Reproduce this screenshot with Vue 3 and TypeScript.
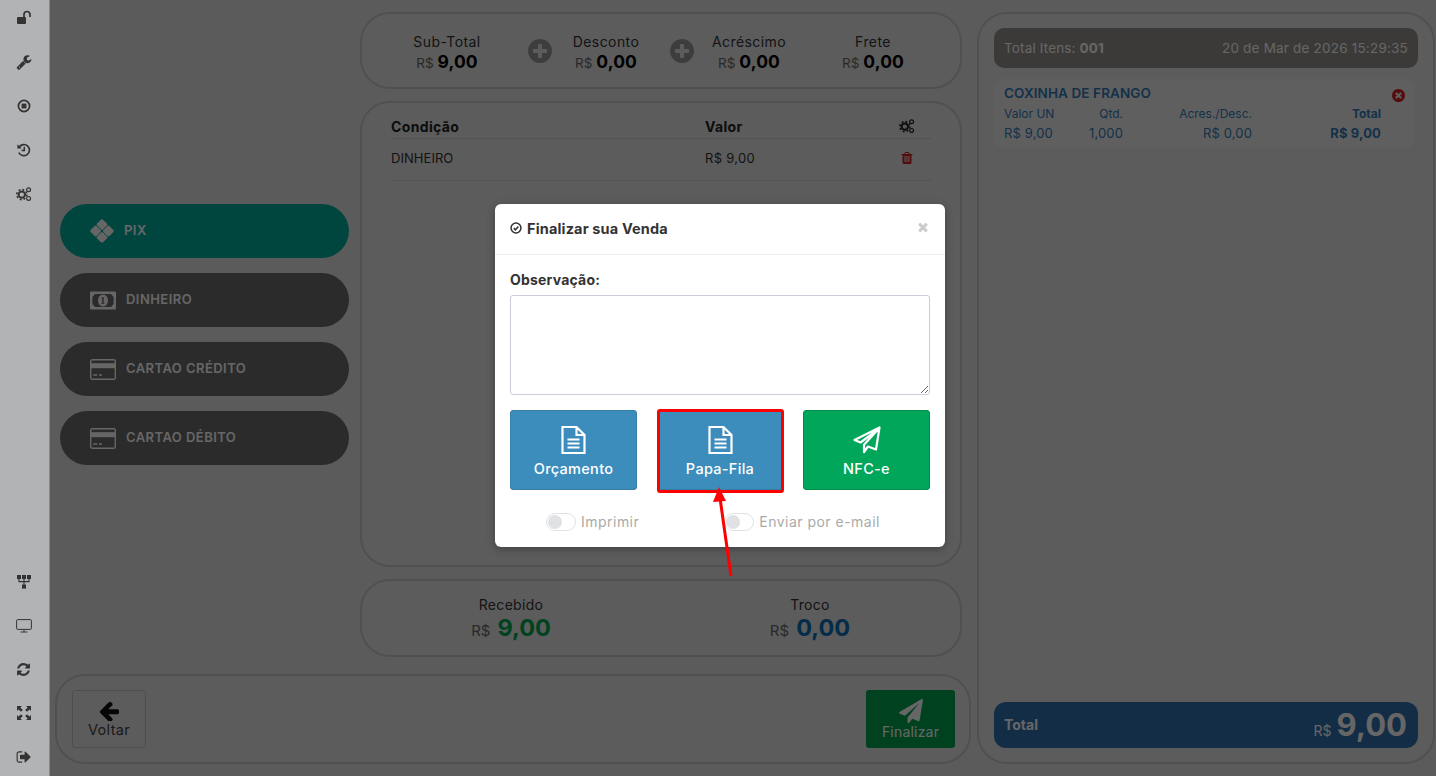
<script setup lang="ts">
const P = {
  plane: 'M1764 11q33 24 27 64l-256 1536q-5 29-32 45-14 8-31 8-11 0-24-5l-453-185-242 295q-18 23-49 23-13 0-22-4-19-7-30.5-23.5t-11.5-36.5v-349l864-1059-1069 925-395-162q-37-14-40-55-2-40 32-59l1664-960q15-9 32-9 20 0 36 11z',
  left: 'M1664 896v128q0 53-32.5 90.5t-84.5 37.5h-704l293 294q38 36 38 90t-38 90l-75 76q-37 37-90 37-52 0-91-37l-651-652q-37-37-37-90 0-52 37-91l651-650q38-38 91-38 52 0 90 38l75 74q38 38 38 91t-38 91l-293 293h704q52 0 84.5 37.5t32.5 90.5z',
  plus: 'M1344 960v-128q0-26-19-45t-45-19h-256v-256q0-26-19-45t-45-19h-128q-26 0-45 19t-19 45v256h-256q-26 0-45 19t-19 45v128q0 26 19 45t45 19h256v256q0 26 19 45t45 19h128q26 0 45-19t19-45v-256h256q26 0 45-19t19-45zm320-64q0 209-103 385.5t-279.5 279.5-385.5 103-385.5-103-279.5-279.5-103-385.5 103-385.5 279.5-279.5 385.5-103 385.5 103 279.5 279.5 103 385.5z',
  times: 'M1490 1322q0 40-28 68l-136 136q-28 28-68 28t-68-28l-294-294-294 294q-28 28-68 28t-68-28l-136-136q-28-28-28-68t28-68l294-294-294-294q-28-28-28-68t28-68l136-136q28-28 68-28t68 28l294 294 294-294q28-28 68-28t68 28l136 136q28 28 28 68t-28 68l-294 294 294 294q28 28 28 68z',
  timesCircle: 'M1277 1122q0-26-19-45l-181-181 181-181q19-19 19-45 0-27-19-46l-90-90q-19-19-46-19-26 0-45 19l-181 181-181-181q-19-19-45-19-27 0-46 19l-90 90q-19 19-19 46 0 26 19 45l181 181-181 181q-19 19-19 45 0 27 19 46l90 90q19 19 46 19 26 0 45-19l181-181 181 181q19 19 45 19 27 0 46-19l90-90q19-19 19-46zm387-226q0 209-103 385.5t-279.5 279.5-385.5 103-385.5-103-279.5-279.5-103-385.5 103-385.5 279.5-279.5 385.5-103 385.5 103 279.5 279.5 103 385.5z',
  refresh: 'M1639 1056q0 5-1 7-64 268-268 434.5t-478 166.5q-146 0-282.5-55t-243.5-157l-129 129q-19 19-45 19t-45-19-19-45v-448q0-26 19-45t45-19h448q26 0 45 19t19 45-19 45l-137 137q71 66 161 102t187 36q134 0 250-65t186-179q11-17 53-117 8-23 30-23h192q13 0 22.5 9.5t9.5 22.5zm25-800v448q0 26-19 45t-45 19h-448q-26 0-45-19t-19-45 19-45l138-138q-148-137-349-137-134 0-250 65t-186 179q-11 17-53 117-8 23-30 23h-199q-13 0-22.5-9.5t-9.5-22.5v-7q65-268 270-434.5t480-166.5q146 0 284 55.5t245 156.5l130-129q19-19 45-19t45 19 19 45z',
  trash: 'M704 1376v-704q0-14-9-23t-23-9h-64q-14 0-23 9t-9 23v704q0 14 9 23t23 9h64q14 0 23-9t9-23zm256 0v-704q0-14-9-23t-23-9h-64q-14 0-23 9t-9 23v704q0 14 9 23t23 9h64q14 0 23-9t9-23zm256 0v-704q0-14-9-23t-23-9h-64q-14 0-23 9t-9 23v704q0 14 9 23t23 9h64q14 0 23-9t9-23zm-544-992h448l-48-117q-7-9-17-11h-317q-10 2-17 11zm928 32v64q0 14-9 23t-23 9h-96v948q0 83-47 143.5t-113 60.5h-832q-66 0-113-58.5t-47-141.5v-952h-96q-14 0-23-9t-9-23v-64q0-14 9-23t23-9h309l70-167q15-37 54-63t79-26h320q40 0 79 26t54 63l70 167h309q14 0 23 9t9 23z',
  wrench: 'M448 1472q0-26-19-45t-45-19-45 19-19 45 19 45 45 19 45-19 19-45zm644-420l-682 682q-37 37-90 37-52 0-91-37l-106-108q-38-36-38-90 0-53 38-91l681-681q39 98 114.5 173.5t173.5 114.5zm634-435q0 39-23 106-47 134-164.5 217.5t-258.5 83.5q-185 0-316.5-131.5t-131.5-316.5 131.5-316.5 316.5-131.5q58 0 121.5 16.5t107.5 46.5q16 11 16 28t-16 28l-293 169v224l193 107q5-3 79-48.5t135.5-81 70.5-35.5q15 0 23.5 10t8.5 25z',
  signout: 'M704 1440q0 4 1 20t.5 26.5-3 23.5-10 19.5-20.5 6.5h-320q-119 0-203.5-84.5t-84.5-203.5v-704q0-119 84.5-203.5t203.5-84.5h320q13 0 22.5 9.5t9.5 22.5q0 4 1 20t.5 26.5-3 23.5-10 19.5-20.5 6.5h-320q-66 0-113 47t-47 113v704q0 66 47 113t113 47h312l11.5 1 11.5 3 8 5.5 7 9 2 13.5zm928-544q0 26-19 45l-544 544q-19 19-45 19t-45-19-19-45v-288h-448q-26 0-45-19t-19-45v-384q0-26 19-45t45-19h448v-288q0-26 19-45t45-19 45 19l544 544q19 19 19 45z',
}
const summary = [
  { label: 'Sub-Total', value: '9,00', cls: 'c1' },
  { label: 'Desconto', value: '0,00', cls: 'c2' },
  { label: 'Acréscimo', value: '0,00', cls: 'c3' },
  { label: 'Frete', value: '0,00', cls: 'c4' },
]
const payments = [
  { label: 'DINHEIRO', icon: 'money' },
  { label: 'CARTAO CRÉDITO', icon: 'card' },
  { label: 'CARTAO DÉBITO', icon: 'card' },
]
</script>

<template>
  <div class="app">
    <aside class="rail">
      <div class="rail-group">
        <svg class="ri" viewBox="0 0 16 16"><rect x="1" y="7" width="9" height="7" rx="1" /><path d="M8 7V4.5a3 3 0 0 1 6 0V7" class="st" stroke-width="1.7" /></svg>
        <svg class="ri" viewBox="0 0 1792 1792"><path :d="P.wrench" /></svg>
        <svg class="ri" viewBox="0 0 16 16"><circle cx="8" cy="8" r="5.6" class="st" stroke-width="1.7" /><rect x="5.6" y="5.6" width="4.8" height="4.8" /></svg>
        <svg class="ri" viewBox="0 0 16 16"><path d="M3.2 5A5.6 5.6 0 1 1 2.8 10.5" class="st" stroke-width="1.7" /><path d="M1.4 2.2v4.4h4.4z" /><path d="M8.3 4.8v3.8H5.6" class="st" stroke-width="1.5" /></svg>
        <svg class="ri cogs" viewBox="0 0 16 16"><circle cx="5.8" cy="8.6" r="3.2" class="st" stroke-width="2" /><circle cx="5.8" cy="8.6" r="5" class="st" stroke-width="1.6" stroke-dasharray="1.96 1.96" /><circle cx="12.6" cy="3.7" r="1.9" class="st" stroke-width="1.2" /><circle cx="12.6" cy="12.4" r="1.9" class="st" stroke-width="1.2" /></svg>
      </div>
      <div class="rail-group">
        <svg class="ri" viewBox="0 0 16 16"><rect x="1" y="1" width="4" height="4" /><rect x="6" y="1" width="4" height="4" /><rect x="11" y="1" width="4" height="4" /><rect x="6" y="10.6" width="4" height="4" /><path d="M3 5v2.6h10V5M8 5v6" class="st" stroke-width="1.1" /></svg>
        <svg class="ri" viewBox="0 0 16 16"><rect x=".6" y="1.6" width="14.8" height="9.8" rx="1" class="st" stroke-width="1" /><path d="M8 11.4v2.2M4.6 14h6.8" class="st" stroke-width="1" /></svg>
        <svg class="ri small" viewBox="0 0 1792 1792"><path :d="P.refresh" /></svg>
        <svg class="ri" viewBox="0 0 16 16"><path d="M1 1h5L4.4 2.6 6.8 5 5 6.8 2.6 4.4 1 6zM15 1v5l-1.6-1.6L11 6.8 9.2 5l2.4-2.4L10 1zM1 15v-5l1.6 1.6L5 9.2 6.8 11l-2.4 2.4L6 15zM15 15h-5l1.6-1.6L9.2 11 11 9.2l2.4 2.4L15 10z" /></svg>
        <svg class="ri" viewBox="0 0 1792 1792"><path :d="P.signout" /></svg>
      </div>
    </aside>

    <div class="workspace">
      <div class="upper">
        <nav class="pay-list">
          <button class="pill pix">
            <svg class="pix-ico" viewBox="0 0 24 24">
              <rect x="7.8" y="1.4" width="8.4" height="8.4" rx="1.4" transform="rotate(45 12 5.6)" />
              <rect x="1.4" y="7.8" width="8.4" height="8.4" rx="1.4" transform="rotate(45 5.6 12)" />
              <rect x="14.2" y="7.8" width="8.4" height="8.4" rx="1.4" transform="rotate(45 18.4 12)" />
              <rect x="7.8" y="14.2" width="8.4" height="8.4" rx="1.4" transform="rotate(45 12 18.4)" />
            </svg>
            <span>PIX</span>
          </button>
          <button v-for="p in payments" :key="p.label" class="pill">
            <svg v-if="p.icon === 'money'" class="pay-ico" viewBox="0 0 26 18">
              <rect width="26" height="18" rx="1" />
              <path d="M5 2.4h16l2.6 3v7.2L21 15.6H5l-2.6-3V5.4z" class="hole" />
              <ellipse cx="13" cy="9" rx="5" ry="6" />
              <text x="13" y="12.6" text-anchor="middle" class="one">1</text>
            </svg>
            <svg v-else class="pay-ico" viewBox="0 0 26 21">
              <rect x=".7" y=".7" width="24.6" height="19.6" rx="1.6" class="frame" />
              <rect x="1" y="4.2" width="24" height="5" />
              <path d="M3.2 16h4M9 16h3" class="dash" />
            </svg>
            <span>{{ p.label }}</span>
          </button>
        </nav>

        <section class="center">
          <div class="panel summary">
            <template v-for="(s, i) in summary" :key="s.label">
              <div class="sum-col" :class="s.cls">
                <div class="sum-label">{{ s.label }}</div>
                <div class="sum-val"><small>R$</small> <b>{{ s.value }}</b></div>
              </div>
              <svg v-if="i < 2" class="plus" :class="i === 0 ? 'p1' : 'p2'" viewBox="128 128 1536 1536"><path :d="P.plus" /></svg>
            </template>
          </div>

          <div class="panel pay-table">
            <table>
              <thead>
                <tr>
                  <th class="t1">Condição</th>
                  <th class="t2">Valor</th>
                  <th class="t3">
                    <svg class="th-cog" viewBox="0 0 16 16"><circle cx="5.8" cy="8.6" r="3.2" class="st" stroke-width="2" /><circle cx="5.8" cy="8.6" r="5" class="st" stroke-width="1.6" stroke-dasharray="1.96 1.96" /><circle cx="12.6" cy="3.7" r="1.9" class="st" stroke-width="1.2" /><circle cx="12.6" cy="12.4" r="1.9" class="st" stroke-width="1.2" /></svg>
                  </th>
                </tr>
              </thead>
              <tbody>
                <tr>
                  <td>DINHEIRO</td>
                  <td class="money">R$ 9,00</td>
                  <td class="t3"><svg class="trash" viewBox="0 0 1792 1792"><path :d="P.trash" /></svg></td>
                </tr>
              </tbody>
            </table>
          </div>

          <div class="panel received">
            <div class="rec-col">
              <div class="rec-label">Recebido</div>
              <div class="rec-val"><small>R$</small><b class="green">9,00</b></div>
            </div>
            <div class="rec-col">
              <div class="rec-label">Troco</div>
              <div class="rec-val"><small>R$</small><b class="blue">0,00</b></div>
            </div>
          </div>
        </section>
      </div>

      <footer class="panel actions">
        <button class="act back">
          <svg class="act-ico" viewBox="128 128 1536 1536"><path :d="P.left" /></svg>
          <span>Voltar</span>
        </button>
        <button class="act finish">
          <svg class="act-ico" viewBox="0 0 1792 1792"><path :d="P.plane" /></svg>
          <span>Finalizar</span>
        </button>
      </footer>
    </div>

    <aside class="panel cart">
      <div class="cart-head">
        <span>Total Itens: <b>001</b></span>
        <span class="date">20 de Mar de 2026 15:29:35</span>
      </div>
      <div class="item">
        <svg class="item-x" viewBox="128 128 1536 1536"><path :d="P.timesCircle" /></svg>
        <div class="item-name">COXINHA DE FRANGO</div>
        <div class="item-grid">
          <span class="l">Valor UN</span><span>Qtd.</span><span>Acres./Desc.</span><b>Total</b>
          <span class="l v">R$ 9,00</span><span class="v">1,000</span><span class="v">R$ 0,00</span><b class="v">R$ 9,00</b>
        </div>
      </div>
      <div class="grand">
        <b class="grand-label">Total</b>
        <div class="grand-val"><small>R$</small><b>9,00</b></div>
      </div>
    </aside>

    <div class="backdrop">
      <div class="modal">
        <header class="modal-head">
          <svg class="check" viewBox="0 0 16 16"><circle cx="8" cy="8" r="6.6" /><path d="M5 8.2l2.2 2.2L11.2 6" /></svg>
          <h4>Finalizar sua Venda</h4>
          <svg class="close" viewBox="0 0 1792 1792"><path :d="P.times" /></svg>
        </header>
        <div class="modal-body">
          <label class="obs-label">Observação:</label>
          <textarea class="obs"></textarea>
          <div class="choices">
            <button class="choice bl">
              <svg class="doc" viewBox="0 0 26 30"><path d="M2 2h14l8 8v18H2zM16 2v8h8M7 14.5h12M7 18.5h12M7 22.5h12" /></svg>
              <span>Orçamento</span>
            </button>
            <button class="choice bl">
              <svg class="doc" viewBox="0 0 26 30"><path d="M2 2h14l8 8v18H2zM16 2v8h8M7 14.5h12M7 18.5h12M7 22.5h12" /></svg>
              <span>Papa-Fila</span>
              <i class="mark"></i>
            </button>
            <button class="choice gr">
              <svg class="plane-o" viewBox="0 0 30 30"><path d="M27.5 2.5 24 24.5l-8-3-4 5.5v-7.2L26 4.5 8.5 17.5 2.5 15z" /></svg>
              <span>NFC-e</span>
            </button>
          </div>
          <div class="toggles">
            <label class="tg t-a"><i class="sw"></i>Imprimir</label>
            <label class="tg t-b"><i class="sw"></i>Enviar por e-mail</label>
          </div>
        </div>
      </div>
      <svg class="arrow" viewBox="0 0 30 100" width="30" height="100">
        <path d="M17 92 6 14" class="arrow-line" />
        <path d="M5 3 12 17 -1 18z" class="arrow-head" />
      </svg>
    </div>
  </div>
</template>

<style scoped>
.app { position: relative; display: flex; width: 1436px; height: 776px; overflow: hidden; background: #e3e3e3; font-family: Inter, "Open Sans", sans-serif; color: #333; }
button { font-family: inherit; cursor: pointer; }
.st { fill: none; stroke: currentColor; }

.rail { position: relative; z-index: 3; flex: 0 0 50px; box-sizing: border-box; display: flex; flex-direction: column; justify-content: space-between; padding: 10px 0 11px; background: #b2b3b5; border-right: 1px solid #88898b; color: #333; }
.rail-group { display: flex; flex-direction: column; align-items: center; gap: 28px; padding-right: 2px; }
.ri { width: 16px; height: 16px; fill: #333; }
.ri.small { width: 15px; height: 15px; }

.workspace { flex: 0 0 921px; display: flex; flex-direction: column; }
.upper { flex: 1; display: flex; }
.pay-list { flex: 0 0 310px; display: flex; flex-direction: column; justify-content: center; gap: 15px; padding: 12px 0 0 10px; box-sizing: border-box; }
.pill { width: 289px; height: 54px; border: 0; border-radius: 27px; background: #6b6b6b; color: #fff; display: flex; align-items: center; gap: 10px; padding: 0 0 0 30px; font-size: 13px; font-weight: 600; letter-spacing: .45px; }
.pill span { margin-top: -2px; }
.pill.pix { background: #00af9f; }
.pix-ico { width: 24px; height: 24px; fill: #fff; }
.pay-ico { width: 26px; height: 21px; fill: #fff; }
.hole { fill: #6b6b6b; }
.one { fill: #6b6b6b; font-size: 10px; font-weight: 700; font-family: "Liberation Serif", serif; }
.frame { fill: none; stroke: #fff; stroke-width: 1.4; }
.dash { stroke: #fff; stroke-width: 1.3; fill: none; }

.center { flex: 0 0 601px; display: flex; flex-direction: column; gap: 12px; padding-top: 12px; }
.panel { box-sizing: border-box; background: #e6e6e6; border: 2px solid #c8c8c8; border-radius: 30px; }

.summary { height: 77px; display: grid; grid-template-columns: 150px 36px 96px 10px 36px 98px 150px; padding-left: 10px; align-items: center; }
.sum-col { text-align: center; grid-row: 1; padding-top: 5px; }
.sum-col.c1 { grid-column: 1; }
.sum-col.c2 { grid-column: 3; }
.sum-col.c3 { grid-column: 6; }
.sum-col.c4 { grid-column: 7; }
.p1 { grid-column: 2; grid-row: 1; }
.p2 { grid-column: 5; grid-row: 1; }
.sum-label { font-size: 14px; line-height: 18px; letter-spacing: .42px; }
.sum-val { font-size: 14px; line-height: 22px; color: #666; }
.sum-val small { font-size: 13.5px; }
.sum-val b { font-size: 17.5px; font-weight: 700; color: #000; letter-spacing: .1px; }
.plus { width: 24px; height: 24px; fill: #999; justify-self: center; }

.pay-table { flex: 0 0 466px; padding: 0 29px; }
table { width: 540px; border-collapse: collapse; font-size: 13px; }
th { text-align: left; font-weight: 700; height: 35px; padding: 12px 0 0; box-sizing: border-box; font-size: 14px; letter-spacing: .35px; border-bottom: 1px solid #d0d0d0; color: #222; }
td { height: 42px; padding: 0 0 2px; box-sizing: border-box; border-bottom: 1px solid #d0d0d0; letter-spacing: .05px; }
.money { letter-spacing: .3px; }
.t1 { width: 314px; }
.t3 { width: 48px; text-align: right; padding-right: 16px; box-sizing: border-box; }
th.t3 { padding-top: 12px; }
.th-cog { width: 16px; height: 16px; fill: #222; color: #222; display: block; margin-left: auto; }
.trash { width: 14px; height: 14px; fill: #d02020; display: block; margin-left: auto; margin-right: 1px; }

.received { height: 78px; display: grid; grid-template-columns: 298px 300px; align-items: center; }
.rec-col { text-align: center; padding-top: 4px; }
.rec-label { font-size: 14px; line-height: 18px; letter-spacing: .3px; }
.rec-val { display: flex; justify-content: center; align-items: baseline; gap: 7px; line-height: 27px; }
.rec-val small { font-size: 15px; color: #666; }
.rec-val b { font-size: 23.5px; font-weight: 700; }
.green { color: #00a651; }
.blue { color: #0b6fb5; }

.actions { height: 90px; margin: 17px 0 12px 5px; width: 916px; display: flex; justify-content: space-between; align-items: center; padding: 0 14px 0 15px; }
.act { height: 58px; border-radius: 3px; display: flex; flex-direction: column; align-items: center; justify-content: center; gap: 0; font-size: 14px; letter-spacing: .2px; }
.back { width: 74px; background: transparent; border: 1px solid #c4c4c4; color: #444; font-size: 14.5px; letter-spacing: .35px; }
.finish { width: 89px; background: #00a651; border: 0; color: #fff; }
.act-ico { width: 20px; height: 20px; }
.back .act-ico { fill: #111; }
.finish .act-ico { width: 24px; height: 24px; fill: #fff; }

.cart { width: 458px; height: 752px; margin: 12px 0 0 6px; padding: 14px 15px; position: relative; display: flex; flex-direction: column; }
.cart-head { width: 424px; height: 40px; box-sizing: border-box; border-radius: 10px; background: #94918c; color: #fff; display: flex; justify-content: space-between; align-items: center; padding: 0 10px; font-size: 13.5px; letter-spacing: .15px; }
.date { letter-spacing: .2px; }
.item { position: relative; width: 421px; height: 69px; box-sizing: border-box; margin-top: 11px; background: #eee; border-radius: 10px; padding: 6px 10px 0; color: #337ab7; }
.item-name { font-size: 13.5px; font-weight: 600; line-height: 16px; letter-spacing: .1px; }
.item-x { position: absolute; right: 10px; top: 10px; width: 13px; height: 13px; fill: #d9201f; }
.item-grid { display: grid; grid-template-columns: 50px 69px 129px 129px; font-size: 12px; line-height: 19px; margin-top: 3px; text-align: right; }
.item-grid span, .item-grid b { line-height: 19px; }
.item-grid .l { text-align: left; white-space: nowrap; }
.item-grid .v { font-size: 13px; letter-spacing: .15px; white-space: nowrap; padding-top: 1px; }
.item-grid b { font-weight: 700; }
.grand { margin-top: auto; width: 424px; height: 46px; box-sizing: border-box; border-radius: 12px; background: #2f70ac; color: #fff; display: flex; align-items: center; justify-content: space-between; padding: 0 11px 0 10px; }
.grand-label { font-size: 14px; font-weight: 700; margin-top: -2px; }
.grand-val { display: flex; align-items: baseline; gap: 5px; }
.grand-val small { font-size: 14px; }
.grand-val b { font-size: 31px; font-weight: 700; line-height: 36px; }

.backdrop { position: absolute; inset: 0; z-index: 2; background: rgba(0, 0, 0, .6); display: flex; justify-content: center; align-items: flex-start; padding: 204px 0 0 4px; box-sizing: border-box; }
.modal { width: 450px; height: 343px; background: #fff; border-radius: 6px; box-shadow: 0 2px 8px rgba(0, 0, 0, .3); display: flex; flex-direction: column; }
.modal-head { position: relative; height: 51px; box-sizing: border-box; border-bottom: 1px solid #eee; display: flex; align-items: center; gap: 5px; padding: 0 15px 2px; }
.check { width: 12px; height: 12px; fill: none; stroke: #333; stroke-width: 2; }
h4 { margin: 0; font-size: 14.5px; font-weight: 700; letter-spacing: .15px; color: #333; }
.close { position: absolute; right: 15px; top: 16px; width: 14px; height: 14px; fill: #ccc; }
.modal-body { padding: 16px 15px 0; display: flex; flex-direction: column; }
.obs-label { font-size: 14px; font-weight: 700; line-height: 18px; letter-spacing: .2px; color: #333; }
.obs { display: block; box-sizing: border-box; width: 420px; height: 100px; margin-top: 6px; border: 1px solid #ccccdc; border-radius: 3px; background: #fff; }
.choices { display: flex; justify-content: space-between; margin-top: 15px; }
.choice { position: relative; width: 127px; height: 80px; border-radius: 3px; color: #fff; display: flex; flex-direction: column; align-items: center; justify-content: flex-start; padding: 14px 0 0; gap: 5px; font-size: 14.5px; font-weight: 500; letter-spacing: .3px; }
.bl { background: #3c8dbc; border: 1px solid #367fa9; }
.gr { background: #00a65a; border: 1px solid #008d4c; }
.doc { width: 27px; height: 30px; fill: none; stroke: #fff; stroke-width: 2.2; }
.plane-o { width: 30px; height: 30px; fill: none; stroke: #fff; stroke-width: 2.2; stroke-linejoin: round; }
.mark { position: absolute; left: -1px; top: -2px; width: 127px; height: 84px; box-sizing: border-box; border: 3px solid #f00; border-radius: 3px; }
.toggles { position: relative; margin-top: 23px; height: 18px; display: flex; }
.tg { display: flex; align-items: center; gap: 5px; font-size: 14px; letter-spacing: .48px; color: #aaa; line-height: 18px; }
.t-a { margin-left: 36px; }
.t-b { margin-left: 85px; }
.sw { position: relative; display: block; width: 30px; height: 18px; box-sizing: border-box; border: 1px solid #dfe1e4; border-radius: 9px; background: #fff; }
.sw::after { content: ""; position: absolute; left: 1px; top: 1px; width: 14px; height: 14px; border-radius: 50%; background: #dfe1e4; }
.arrow { position: absolute; left: 714px; top: 484px; overflow: visible; }
.arrow-line { stroke: #f00; stroke-width: 3; fill: none; }
.arrow-head { fill: #f00; }
</style>

<style>
html, body { margin: 0; padding: 0; }
</style>
